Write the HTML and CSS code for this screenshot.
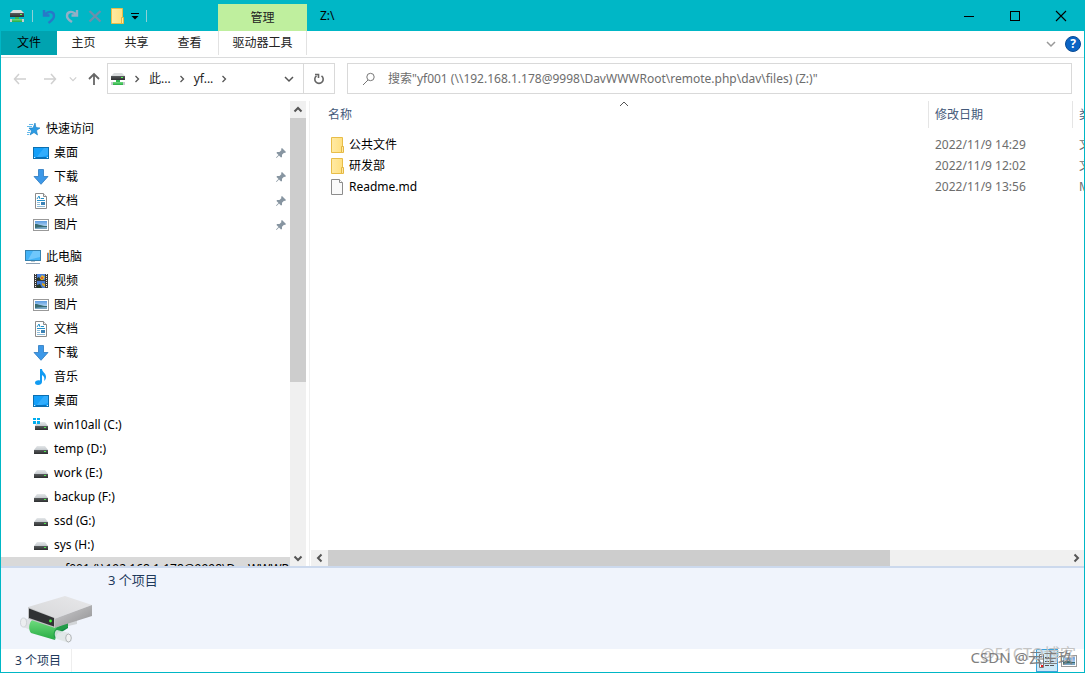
FILE: index.html
```html
<!DOCTYPE html>
<html lang="zh-CN">
<head>
<meta charset="utf-8">
<title>Z:\</title>
<link rel="stylesheet" href="styles.css">
</head>
<body>
<svg class="defs" aria-hidden="true">
  <defs>
    <linearGradient id="g-drive" x1="0" y1="0" x2="0" y2="1"><stop offset="0" stop-color="#e4e7e9"/><stop offset="1" stop-color="#c3c8cc"/></linearGradient>
    <linearGradient id="g-dark" x1="0" y1="0" x2="0" y2="1"><stop offset="0" stop-color="#585b5d"/><stop offset="1" stop-color="#2d2f30"/></linearGradient>
    <linearGradient id="g-side" x1="0" y1="0" x2="1" y2="1"><stop offset="0" stop-color="#cfcfd1"/><stop offset="1" stop-color="#8f8f91"/></linearGradient>
    <linearGradient id="g-top" x1="0" y1="1" x2="1" y2="0"><stop offset="0" stop-color="#d6d7d9"/><stop offset="1" stop-color="#e8e8ea"/></linearGradient>
    <linearGradient id="g-green" x1="0" y1="0" x2="0" y2="1"><stop offset="0" stop-color="#6fdc7e"/><stop offset="1" stop-color="#27ab43"/></linearGradient>
    <linearGradient id="g-folder" x1="0" y1="0" x2="1" y2="0"><stop offset="0" stop-color="#ffeaa5"/><stop offset="1" stop-color="#ffdf7c"/></linearGradient>
    <linearGradient id="g-sky" x1="0" y1="0" x2="0" y2="1"><stop offset="0" stop-color="#5b9be0"/><stop offset="1" stop-color="#dff0fa"/></linearGradient>
  </defs>
  <symbol id="netdrive" viewBox="0 0 16 16">
    <path d="M4 2h8l3 3H1z" fill="#d9dcdd"/><rect x="1" y="5" width="14" height="4" fill="url(#g-dark)"/><rect x="11" y="6" width="2" height="1" fill="#55ff55"/>
    <path d="M6 9h4v3H6z" fill="#35b552"/><rect x="3" y="11" width="10" height="3" fill="url(#g-green)"/><rect x="1" y="11" width="2" height="3" fill="#c7cdd0"/><rect x="13" y="11" width="2" height="3" fill="#c7cdd0"/>
  </symbol>
  <symbol id="drive" viewBox="0 0 16 16">
    <path d="M4 5h8l3 4H1z" fill="url(#g-drive)"/><rect x="1" y="9" width="14" height="4" fill="url(#g-dark)"/><rect x="11" y="10" width="2" height="1" fill="#4eea4e"/>
  </symbol>
  <symbol id="windrive" viewBox="0 0 16 16">
    <path d="M4 5h8l3 4H2z" fill="url(#g-drive)"/><rect x="2" y="9" width="13" height="4" fill="url(#g-dark)"/><rect x="11" y="10" width="2" height="1" fill="#4eea4e"/><path d="M0 1h3v2H0zM4 1h3v2H4zM0 4h3v3H0zM4 4h3v3H4z" fill="#00adef"/>
  </symbol>
  <symbol id="star" viewBox="0 0 16 16">
    <path d="M10 2l1 4.500 4 .5-3.500 2.500 1 4.500-3.500-2.500L5 14l1.500-4L4 7h4z" fill="#2b9be4" stroke="#167cc0" stroke-width=".6"/><path d="M4 3.500h4M2 5.500h5M3 9.500h2M2 11.500h3M2 13.500h2" stroke="#65b9ea"/>
  </symbol>
  <symbol id="desktop" viewBox="0 0 16 16">
    <rect x=".5" y="2.500" width="15" height="11" fill="#14a0fa" stroke="#0b6fb0"/><path d="M11 3h4v7L5 13H3z" fill="#45b6ff" opacity=".6"/><path d="M1 12.500h1m2 0h9m1 0h1" stroke="#d9f0ff"/><path d="M3 12.500h10" stroke="#0870b8"/>
  </symbol>
  <symbol id="download" viewBox="0 0 16 16"><path d="M5.500 .5h5v7h4.500L8 15.300 1 7.500h4.500z" fill="#3c98e8" stroke="#2b78bf" stroke-width=".8"/></symbol>
  <symbol id="doc" viewBox="0 0 16 16">
    <path d="M2.500 .5h8l3 3v12h-11z" fill="#fff" stroke="#8b8b8b"/><path d="M10.500 .5v3h3" fill="#eee" stroke="#8b8b8b"/><path d="M4 6l2-3 1 3M8 5.500h3M4 7.500h8" stroke="#2590c9" fill="none"/><path d="M4 9.500h3M4 11.500h3M4 13.500h8" stroke="#8fbcd8"/><rect x="8" y="9" width="4" height="3" fill="#3c82b5"/>
  </symbol>
  <symbol id="picture" viewBox="0 0 16 16">
    <rect x=".5" y="2.500" width="15" height="11" fill="#fff" stroke="#999"/><rect x="2" y="4" width="12" height="8" fill="url(#g-sky)"/><path d="M2 7c4 0 6 2 12 2v3H2z" fill="#386b70"/><path d="M2 11c4-1 8-1 12-1v2H2z" fill="#7aa7c4"/>
  </symbol>
  <symbol id="computer" viewBox="0 0 16 16">
    <rect x=".5" y="1.500" width="15" height="10" fill="#43b3f7" stroke="#3681ae"/><path d="M8 2h7v6L3 11z" fill="#8dd4ff" opacity=".6"/><rect x="6" y="12" width="4" height="1" fill="#bcc8d0"/><path d="M1 14.500h14" stroke="#8ba0b4"/>
  </symbol>
  <symbol id="video" viewBox="0 0 16 16">
    <rect x="1" y="1" width="14" height="14" fill="#393939"/><path d="M2.500 1v14M13.500 1v14" stroke="#eee" stroke-dasharray="1 1"/><rect x="4" y="1" width="8" height="6" fill="#4f82d8"/><rect x="4" y="8" width="8" height="7" fill="#477bd0"/><path d="M7 5l2-3 3 2-2 3H7z" fill="#e6b728"/><path d="M4 5l2-1 2 3H4zM4 12l3-1 2 4H4z" fill="#243a28"/><path d="M9 10l3 1v3l-3-2z" fill="#d8a726"/><circle cx="9" cy="5" r="1" fill="#d84235"/>
  </symbol>
  <symbol id="music" viewBox="0 0 16 16"><path d="M7 0h2c0 3 4 4 4 8 0 2-1 3-2 4 1-3 0-5-2-6v7c0 2-2 3-4 3-1.500 0-3-.7-3-2.200C2 12 4 11 7 11.500z" fill="#119bf2"/></symbol>
  <symbol id="folder" viewBox="0 0 16 16"><path d="M2.500 .5h11v9l1 .8v5.200h-12z" fill="url(#g-folder)" stroke="#e8bd48"/><path d="M12.500 15V9.500h2V15" fill="#ffe8a0" stroke="#e3b744"/></symbol>
  <symbol id="file" viewBox="0 0 16 16"><path d="M2.500 .5h8l3 3v12h-11z" fill="#fafafa" stroke="#8c8c8c"/><path d="M10.500 .5v3h3" fill="#fff" stroke="#8c8c8c"/></symbol>
  <symbol id="pin" viewBox="0 0 12 12"><path d="M7 1l4 4-1 1-1-.3-2 2L7 10l-1 .5L4 8.500 1.500 11 1 10.500 3.500 8 1.500 6l.5-1h2.500l2-2L6 2z" fill="#8795a1"/></symbol>
  <symbol id="chev-r" viewBox="0 0 8 8"><path d="M2.500 1l3 3-3 3" fill="none" stroke="#555" stroke-width="1.300"/></symbol>
  <symbol id="chev-d" viewBox="0 0 10 10"><path d="M1 3l4 4 4-4" fill="none" stroke="currentColor" stroke-width="1.500"/></symbol>
  <symbol id="chev-bold" viewBox="0 0 10 10"><path d="M1.500 3.500L5 7l3.500-3.500" fill="none" stroke="currentColor" stroke-width="2"/></symbol>
  <symbol id="arr-l" viewBox="0 0 14 12"><path d="M6 1L1.500 6 6 11M2 6h11" fill="none" stroke="currentColor" stroke-width="1.500"/></symbol>
</svg>

<div class="window">
  <header class="titlebar">
    <div class="quick">
      <svg class="i16"><use href="#netdrive"/></svg>
      <span class="bar"></span>
      <button class="tool" aria-label="撤消"><svg class="i16" viewBox="0 0 16 16"><path d="M3 2v5.500h5.500M3.500 7C7 2.500 13 3 13 8c0 3-3 5-5.500 7" fill="none" stroke="#2878c8" stroke-width="2.400"/></svg></button>
      <button class="tool" aria-label="恢复"><svg class="i16" viewBox="0 0 16 16"><path d="M13 2v5.500H7.500M12.500 7C9 2.500 3 3 3 8c0 3 2 4 5 6" fill="none" stroke="#93afc6" stroke-width="2.400"/></svg></button>
      <button class="tool" aria-label="删除"><svg class="i16" viewBox="0 0 16 16"><path d="M2.500 3l11 10.500M13.500 3l-11 10.500" stroke="#6d8fab" stroke-width="2.400"/></svg></button>
      <button class="tool" aria-label="新建文件夹"><svg class="i16"><use href="#folder"/></svg></button>
      <button class="tool small" aria-label="自定义"><svg class="i8" viewBox="0 0 8 8"><path d="M0 1.500h8" stroke="#000"/><path d="M.5 4h7L4 7.500z" fill="#000"/></svg></button>
      <span class="bar"></span>
    </div>
    <span class="context">管理</span>
    <span class="caption">Z:\</span>
    <div class="controls">
      <button aria-label="最小化"><svg class="i12" viewBox="0 0 12 12"><path d="M1 6.500h10" stroke="#000"/></svg></button>
      <button aria-label="最大化"><svg class="i12" viewBox="0 0 12 12"><rect x="1.500" y="1.500" width="9" height="9" fill="none" stroke="#000"/></svg></button>
      <button aria-label="关闭"><svg class="i12" viewBox="0 0 12 12"><path d="M1 1l10 10M11 1L1 11" stroke="#000" stroke-width="1.100"/></svg></button>
    </div>
  </header>

  <nav class="ribbon">
    <button class="tab active">文件</button>
    <button class="tab">主页</button>
    <button class="tab">共享</button>
    <button class="tab">查看</button>
    <button class="tab drive-tab">驱动器工具</button>
    <button class="expand" aria-label="展开功能区"><svg class="i10"><use href="#chev-d"/></svg></button>
    <button class="help" aria-label="帮助">?</button>
  </nav>

  <div class="address">
    <div class="history">
      <button class="off" aria-label="后退"><svg class="arrow"><use href="#arr-l"/></svg></button>
      <button class="off flip" aria-label="前进"><svg class="arrow"><use href="#arr-l"/></svg></button>
      <button class="off" aria-label="最近位置"><svg class="i8"><use href="#chev-d"/></svg></button>
      <button aria-label="向上"><svg class="i14" viewBox="0 0 14 14"><path d="M7 13V2M2 7l5-5 5 5" fill="none" stroke="#666" stroke-width="1.800"/></svg></button>
    </div>
    <div class="path">
      <svg class="i16"><use href="#netdrive"/></svg>
      <svg class="i8"><use href="#chev-r"/></svg>
      <button>此...</button>
      <svg class="i8"><use href="#chev-r"/></svg>
      <button>yf...</button>
      <svg class="i8"><use href="#chev-r"/></svg>
      <button class="drop" aria-label="以前的位置"><svg class="i10"><use href="#chev-d"/></svg></button>
      <button class="refresh" aria-label="刷新"><svg class="i12" viewBox="0 0 12 12"><path d="M3.500 2.800A4.200 4.200 0 1 0 8.500 2.800M2 1.500h3.500v3.500" fill="none" stroke="#666" stroke-width="1.600"/></svg></button>
    </div>
    <label class="search">
      <svg class="i14" viewBox="0 0 14 14"><circle cx="8.500" cy="5" r="3.700" fill="none" stroke="#777"/><path d="M6 8l-5 5" stroke="#777"/></svg>
      <input type="text" aria-label="搜索" placeholder="搜索&quot;yf001 (\\192.168.1.178@9998\DavWWWRoot\remote.php\dav\files) (Z:)&quot;">
    </label>
  </div>

  <div class="main">
    <aside class="side">
      <ul class="tree">
        <li class="root"><svg class="i16"><use href="#star"/></svg>快速访问</li>
        <li><svg class="i16"><use href="#desktop"/></svg>桌面<svg class="pin"><use href="#pin"/></svg></li>
        <li><svg class="i16"><use href="#download"/></svg>下载<svg class="pin"><use href="#pin"/></svg></li>
        <li><svg class="i16"><use href="#doc"/></svg>文档<svg class="pin"><use href="#pin"/></svg></li>
        <li><svg class="i16"><use href="#picture"/></svg>图片<svg class="pin"><use href="#pin"/></svg></li>
        <li class="root next"><svg class="i16"><use href="#computer"/></svg>此电脑</li>
        <li><svg class="i16"><use href="#video"/></svg>视频</li>
        <li><svg class="i16"><use href="#picture"/></svg>图片</li>
        <li><svg class="i16"><use href="#doc"/></svg>文档</li>
        <li><svg class="i16"><use href="#download"/></svg>下载</li>
        <li><svg class="i16"><use href="#music"/></svg>音乐</li>
        <li><svg class="i16"><use href="#desktop"/></svg>桌面</li>
        <li><svg class="i16"><use href="#windrive"/></svg>win10all (C:)</li>
        <li><svg class="i16"><use href="#drive"/></svg>temp (D:)</li>
        <li><svg class="i16"><use href="#drive"/></svg>work (E:)</li>
        <li><svg class="i16"><use href="#drive"/></svg>backup (F:)</li>
        <li><svg class="i16"><use href="#drive"/></svg>ssd (G:)</li>
        <li><svg class="i16"><use href="#drive"/></svg>sys (H:)</li>
        <li class="selected"><svg class="i16"><use href="#drive"/></svg>yf001 (\\192.168.1.178@9998\DavWWWRoot</li>
      </ul>
      <div class="vscroll">
        <button aria-label="向上滚动"><svg class="i10 up"><use href="#chev-bold"/></svg></button>
        <span class="vthumb"></span>
        <span class="vrest"></span>
        <button aria-label="向下滚动"><svg class="i10"><use href="#chev-bold"/></svg></button>
      </div>
    </aside>
    <section class="content">
      <div class="list">
        <table>
          <colgroup><col><col class="c-date"><col class="c-type"></colgroup>
          <thead><tr><th>名称<svg class="sort" viewBox="0 0 10 6"><path d="M1 5l4-4 4 4" fill="none" stroke="#555"/></svg></th><th>修改日期</th><th>类型</th></tr></thead>
          <tbody>
            <tr><td><span class="name"><svg class="i16"><use href="#folder"/></svg>公共文件</span></td><td>2022/11/9 14:29</td><td>文件夹</td></tr>
            <tr><td><span class="name"><svg class="i16"><use href="#folder"/></svg>研发部</span></td><td>2022/11/9 12:02</td><td>文件夹</td></tr>
            <tr><td><span class="name"><svg class="i16"><use href="#file"/></svg>Readme.md</span></td><td>2022/11/9 13:56</td><td>MD 文件</td></tr>
          </tbody>
        </table>
      </div>
      <div class="hscroll">
        <button aria-label="向左滚动"><svg class="i10 left"><use href="#chev-bold"/></svg></button>
        <span class="hthumb"></span>
        <span class="hrest"></span>
        <button aria-label="向右滚动"><svg class="i10 right"><use href="#chev-bold"/></svg></button>
      </div>
    </section>
  </div>

  <section class="details">
    <svg class="bigdrive" viewBox="0 0 76 52">
      <path d="M40 30l17-3v5l-13 3z" fill="#d3d6d9"/>
      <path d="M36 36l12-6v6l-8 5z" fill="#138a43"/>
      <path d="M4 26l12 4v10L3 35z" fill="#dfe2e5"/>
      <ellipse cx="3.500" cy="30.500" rx="3" ry="4.500" fill="#eceef0" stroke="#c8ccd0" stroke-width=".8"/>
      <path d="M12 28l28 6c-5 2-7 7-5 14l-24-7c-3-4-2-10 1-13z" fill="url(#g-green)"/>
      <path d="M35 48c-3-6-1-12 5-14l8-3v4l-8 4c-3 2-4 5-5 9z" fill="#229c49"/>
      <path d="M37 38l12 3v10l-12-4c-3-2-3-8 0-9z" fill="#dfe5e5" opacity=".9"/>
      <ellipse cx="48.500" cy="46" rx="2.800" ry="4" fill="#f0f1f2" stroke="#b1b5b8"/>
      <path d="M8 15L45 4l27 9-38 14z" fill="url(#g-top)"/>
      <path d="M34 27l38-14v11L34 36z" fill="url(#g-side)"/>
      <path d="M8 15l27 11v10L8 27z" fill="#c3c4c6"/>
      <path d="M9 16.500l25 9.500v8.500L9 26z" fill="#303234"/>
      <circle cx="30.500" cy="29" r="1.400" fill="#3eff35"/>
    </svg>
    <span class="count">3 个项目</span>
  </section>

  <footer class="status">
    <span class="total">3 个项目</span>
    <span class="mark second">@51CTO博客</span>
    <div class="views">
      <button class="on" aria-label="详细信息"><svg class="i16" viewBox="0 0 16 16"><path d="M.5 1.500h4v13h-4zM.5 6h4M.5 10h4" fill="#fff" stroke="#777"/><path d="M6 4.500h4m1 0h4M6 8.500h4m1 0h4M6 12.500h4m1 0h4" stroke="#555"/><path d="M2 12h2v2H2z" fill="#e22"/></svg></button>
      <button aria-label="大缩略图"><svg class="i16"><use href="#picture"/></svg></button>
    </div>
    <span class="mark">CSDN @云主玖</span>
  </footer>
</div>
</body>
</html>
```
FILE: styles.css
```css
* { box-sizing: border-box; }
body {
  margin: 0;
  font: 12px/16px "Noto Sans", "Noto Sans CJK SC", sans-serif;
  color: #000;
}
button { border: 0; padding: 0; background: none; font: inherit; color: inherit; display: flex; align-items: center; justify-content: center; }
svg { display: block; flex: none; }
.defs { position: absolute; width: 0; height: 0; }
.i8 { width: 8px; height: 8px; }
.i10 { width: 10px; height: 10px; }
.i12 { width: 12px; height: 12px; }
.i14 { width: 14px; height: 14px; }
.i16 { width: 16px; height: 16px; }

.window { height: 100vh; display: flex; flex-direction: column; border: 1px solid #00b7c6; border-top: 0; background: #fff; overflow: hidden; }

.titlebar { height: 31px; flex: none; display: flex; background: #00b7c6; }
.quick { width: 217px; display: flex; align-items: center; padding-left: 8px; }
.bar { width: 1px; height: 12px; margin: 0 4px 0 7px; background: #8fd0d6; }
.tool { width: 23px; height: 22px; }
.quick .tool:nth-of-type(4) { width: 22px; }
.quick .small { width: 14px; }
.quick .small + .bar { margin-left: 4px; }
.context { width: 89px; margin-top: 4px; display: flex; align-items: center; justify-content: center; background: #bfef9e; color: #222; }
.caption { padding: 8px 13px; }
.controls { margin-left: auto; display: flex; }
.controls button { width: 46px; height: 31px; }

.ribbon { height: 27px; flex: none; display: flex; align-items: stretch; border-bottom: 1px solid #dadbdc; color: #222; }
.tab { width: 53px; height: 24px; }
.tab.active { width: 56px; background: #00a3b0; color: #000; }
.drive-tab { width: 89px; margin-left: 2px; border: solid #e2e2e2; border-width: 0 1px; }
.expand { margin-left: auto; width: 16px; color: #999; }
.help { width: 16px; height: 16px; margin: 5px 3px 0 6px; border-radius: 50%; background: #0b64c4; border: 1px solid #0a4b94; color: #fff; font-weight: 700; }

.address { height: 43px; flex: none; display: flex; align-items: flex-start; padding: 5px 12px 0 0; }
.history { width: 106px; height: 31px; display: flex; align-items: center; padding-left: 12px; gap: 16px; color: #666; }
.history .off { color: #d0d0d0; }
.history .off + .off + .off { margin-left: -4px; }
.history button:last-child { margin-left: -6px; }
.arrow { width: 14px; height: 12px; }
.flip { transform: scaleX(-1); }
.path { width: 228px; height: 31px; display: flex; align-items: center; border: 1px solid #d9d9d9; padding-left: 2px; color: #222; }
.path > .i8 { margin: 0 8px 0 7px; }
.drop { margin-left: auto; width: 28px; color: #555; }
.refresh { width: 31px; height: 29px; border-left: 1px solid #d9d9d9; }
.search { flex: 1; height: 31px; margin-left: 12px; display: flex; align-items: center; gap: 12px; border: 1px solid #d9d9d9; padding: 0 14px; }
.search input { flex: 1; border: 0; padding: 0; outline: 0; font: inherit; }
.search input::placeholder { color: #6d6d6d; opacity: 1; }

.main { flex: 1; min-height: 0; display: flex; }
.side { width: 309px; flex: none; display: flex; border-right: 1px solid #f0f0f0; padding-right: 3px; }
.tree { flex: 1; min-width: 0; margin: 0; padding: 16px 0 0; list-style: none; overflow: hidden; }
.tree li { height: 24px; display: flex; align-items: center; gap: 5px; padding: 0 3px 0 32px; white-space: nowrap; overflow: hidden; }
.tree .root { padding-left: 24px; }
.tree .next { margin-top: 8px; }
.tree .selected { background: #d9d9d9; gap: 10px; }
.pin { width: 12px; height: 12px; margin-left: auto; }
.vscroll { width: 16px; display: flex; flex-direction: column; background: #f0f0f0; color: #555; }
.vscroll button { height: 17px; flex: none; }
.vthumb { flex: 264 0 0; background: #cdcdcd; }
.vrest { flex: 167 0 0; }
.up { transform: rotate(180deg); }
.left { transform: rotate(90deg); }
.right { transform: rotate(-90deg); }

.content { flex: 1; min-width: 0; display: flex; flex-direction: column; }
.list { flex: 1; overflow: hidden; }
table { width: calc(100% + 60px); table-layout: fixed; border-collapse: separate; border-spacing: 0; }
.c-date { width: 144px; }
.c-type { width: 72px; }
th { height: 27px; padding: 0 0 0 6px; text-align: left; font-weight: 400; color: #44597a; border-left: 1px solid #e5e5e5; position: relative; }
th:first-child { padding-left: 18px; border-left: 0; }
.sort { position: absolute; left: 50%; top: 0; width: 10px; height: 6px; }
td { height: 21px; padding: 0 0 0 7px; color: #6d6d6d; white-space: nowrap; }
tbody::before { content: ""; display: block; height: 6px; }
td:first-child { padding-left: 19px; color: #000; }
.name { display: flex; align-items: center; gap: 4px; }
.hscroll { height: 16px; flex: none; display: flex; margin-left: 1px; background: #f0f0f0; color: #555; }
.hscroll button { width: 17px; flex: none; }
.hthumb { flex: 562 0 0; background: #cdcdcd; }
.hrest { flex: 177 0 0; }

.details { height: 83px; flex: none; display: flex; align-items: flex-start; border-top: 2px solid #ccd9ed; background: #f0f4fc; color: #1e395b; padding-left: 19px; }
.bigdrive { width: 76px; height: 52px; margin-top: 24px; }
.count { margin: 4px 0 0 12px; font-size: 13px; }
.status { height: 23px; flex: none; display: flex; align-items: stretch; position: relative; color: #1e395b; padding-right: 4px; }
.total { padding: 4px 10px 0 14px; border-right: 1px solid #eee; }
.views { margin-left: auto; display: flex; }
.views button { width: 22px; }
.views .on { background: #cce8f7; border: 1px solid #3da1d9; }
.mark { position: absolute; right: 11px; bottom: 6px; font-size: 15px; line-height: 18px; color: #808080; white-space: nowrap; }
.mark.second { right: 8px; bottom: 9px; font-size: 16px; color: #c4c4c4; }
```
